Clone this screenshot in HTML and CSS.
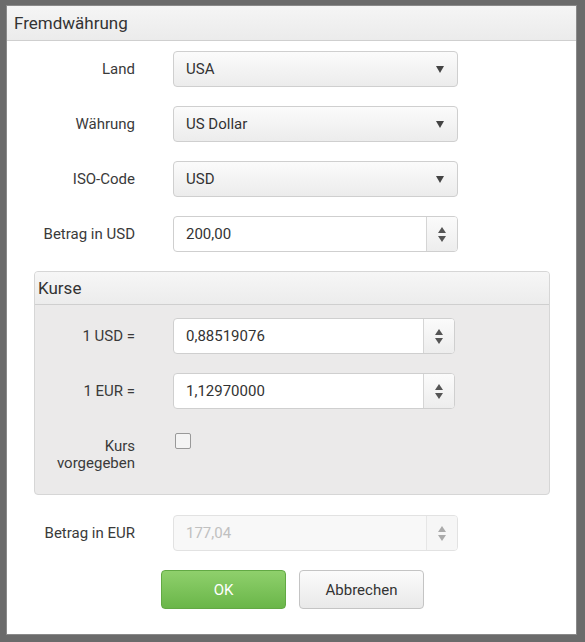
FILE: index.html
```html
<!DOCTYPE html>
<html lang="de">
<head>
<meta charset="utf-8">
<title>Fremdwährung</title>
<link rel="stylesheet" href="styles.css">
</head>
<body>
<div class="dialog">
  <div class="dialog-header">Fremdwährung</div>
  <div class="dialog-body">
    <div class="row">
      <label class="label">Land</label>
      <div class="select"><span class="value">USA</span><span class="caret"></span></div>
    </div>
    <div class="row">
      <label class="label">Währung</label>
      <div class="select"><span class="value">US Dollar</span><span class="caret"></span></div>
    </div>
    <div class="row">
      <label class="label">ISO-Code</label>
      <div class="select"><span class="value">USD</span><span class="caret"></span></div>
    </div>
    <div class="row">
      <label class="label">Betrag in USD</label>
      <div class="spin"><span class="value">200,00</span><span class="spin-btn"><span class="up"></span><span class="down"></span></span></div>
    </div>

    <div class="fieldset">
      <div class="fieldset-header">Kurse</div>
      <div class="fieldset-body">
        <div class="row row-in">
          <label class="label">1 USD =</label>
          <div class="spin"><span class="value">0,88519076</span><span class="spin-btn"><span class="up"></span><span class="down"></span></span></div>
        </div>
        <div class="row row-in">
          <label class="label">1 EUR =</label>
          <div class="spin"><span class="value">1,12970000</span><span class="spin-btn"><span class="up"></span><span class="down"></span></span></div>
        </div>
        <div class="row row-in row-check">
          <label class="label label-multi">Kurs<br>vorgegeben</label>
          <span class="checkbox"></span>
        </div>
      </div>
    </div>

    <div class="row">
      <label class="label">Betrag in EUR</label>
      <div class="spin disabled"><span class="value">177,04</span><span class="spin-btn"><span class="up"></span><span class="down"></span></span></div>
    </div>

    <div class="buttons">
      <button class="btn btn-ok">OK</button>
      <button class="btn btn-cancel">Abbrechen</button>
    </div>
  </div>
</div>
</body>
</html>
```

FILE: styles.css
```css
html, body {
  margin: 0;
  padding: 0;
}
body {
  background: #6b6b6b;
  width: 585px;
  height: 642px;
  overflow: hidden;
  padding: 5px 0 0 6px;
  box-sizing: border-box;
  font-family: Roboto, "Liberation Sans", Arial, sans-serif;
  font-size: 15px;
  color: #3a3a3a;
}
.dialog {
  width: 571px;
  height: 630px;
  box-sizing: border-box;
  background: #fff;
  border: 1px solid #8a8a8a;
  display: flex;
  flex-direction: column;
}
.dialog-header {
  height: 35px;
  box-sizing: border-box;
  padding: 0 0 0 7px;
  font-size: 17px;
  line-height: 34px;
  color: #333;
  background: linear-gradient(#f5f5f5, #ebebeb);
  border-bottom: 1px solid #cfcfcf;
}
.dialog-body {
  padding-top: 10px;
  display: flex;
  flex-direction: column;
}
.row {
  display: flex;
  align-items: center;
  height: 36px;
  margin-bottom: 19px;
}
.label {
  width: 128px;
  text-align: right;
  margin-right: 38px;
  flex: none;
}
.select, .spin {
  width: 285px;
  height: 36px;
  box-sizing: border-box;
  border: 1px solid #cfcfcf;
  border-radius: 4px;
  display: flex;
  align-items: center;
  position: relative;
  color: #333;
}
.select {
  background: linear-gradient(#fbfbfb, #ececec);
}
.spin {
  background: #fff;
}
.value {
  flex: 1;
  padding-left: 12px;
}
.caret {
  width: 0;
  height: 0;
  border-left: 4px solid transparent;
  border-right: 4px solid transparent;
  border-top: 7px solid #444;
  margin-right: 13px;
}
.spin-btn {
  width: 30px;
  align-self: stretch;
  border-left: 1px solid #d5d5d5;
  background: linear-gradient(#fbfbfb, #ededed);
  border-radius: 0 3px 3px 0;
  display: flex;
  flex-direction: column;
  align-items: center;
  justify-content: center;
  gap: 3px;
}
.up {
  width: 0;
  height: 0;
  border-left: 4px solid transparent;
  border-right: 4px solid transparent;
  border-bottom: 6px solid #555;
}
.down {
  width: 0;
  height: 0;
  border-left: 4px solid transparent;
  border-right: 4px solid transparent;
  border-top: 6px solid #555;
}
.fieldset {
  margin-left: 27px;
  width: 516px;
  height: 224px;
  box-sizing: border-box;
  border: 1px solid #d6d6d6;
  border-radius: 4px;
  background: #ebeaea;
  margin-bottom: 20px;
  overflow: hidden;
}
.fieldset-header {
  height: 33px;
  box-sizing: border-box;
  padding-left: 3px;
  font-size: 17px;
  line-height: 32px;
  color: #333;
  background: linear-gradient(#f6f6f6, #ececec);
  border-bottom: 1px solid #cfcfcf;
}
.fieldset-body {
  padding-top: 13px;
}
.row-in .label {
  width: 100px;
}
.row-in .spin {
  width: 282px;
}
.row-check {
  align-items: flex-start;
  height: auto;
  margin-top: 5px;
  padding-top: 5px;
}
.label-multi {
  line-height: 17px;
  padding-top: 5px;
}
.checkbox {
  width: 14px;
  height: 14px;
  margin-left: 2px;
  border: 1px solid #999;
  border-radius: 2px;
  background: #f4f4f4;
}
.spin.disabled {
  background: #f8f8f8;
  border-color: #e2e2e2;
  color: #c0c0c0;
}
.spin.disabled .spin-btn {
  border-left-color: #e6e6e6;
  background: #f6f6f6;
}
.spin.disabled .up { border-bottom-color: #aaa; }
.spin.disabled .down { border-top-color: #aaa; }
.buttons {
  display: flex;
  gap: 13px;
  padding-left: 154px;
  margin-top: 0;
}
.btn {
  width: 125px;
  height: 39px;
  box-sizing: border-box;
  border-radius: 4px;
  font-family: inherit;
  font-size: 15px;
  cursor: pointer;
}
.btn-ok {
  background: linear-gradient(#8fd06c, #6ab649);
  border: 1px solid #62a944;
  color: #fff;
}
.btn-cancel {
  background: linear-gradient(#fbfbfb, #e9e9e9);
  border: 1px solid #c4c4c4;
  color: #333;
}
```
